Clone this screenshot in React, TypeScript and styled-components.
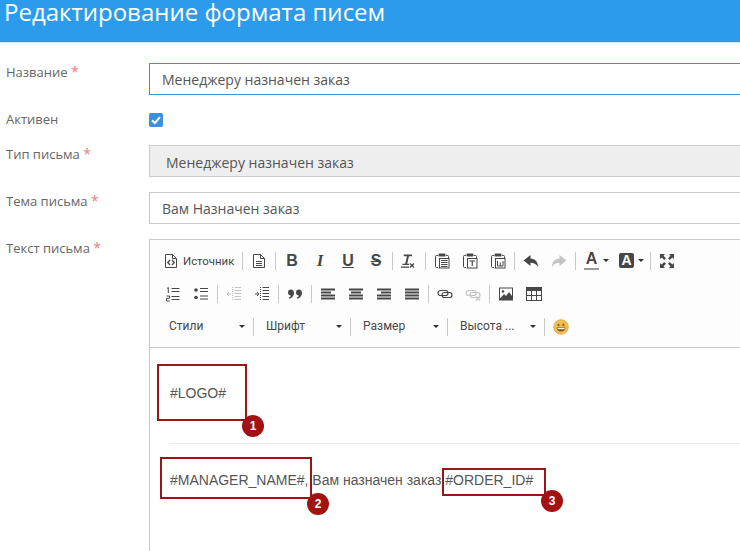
import { FC, ReactNode } from 'react';
import styled, { createGlobalStyle } from 'styled-components';

const GlobalStyle = createGlobalStyle`
	html, body {
		margin: 0;
		padding: 0;
		width: 740px;
		height: 551px;
		overflow: hidden;
		background: #fff;
	}
`;

const INK = '#474747';
const FAINT = '#c4c4c4';

const Glyph: FC<{ children: ReactNode }> = ({ children }) => (
	<svg width="16" height="16" viewBox="0 0 16 16" fill="none">
		{children}
	</svg>
);

const Clipboard: FC<{ children: ReactNode }> = ({ children }) => (
	<Glyph>
		<path d="M4 2.500H2.500Q1.500 2.500 1.500 3.500v10q0 1 1 1H4M12 2.500h1.500q1 0 1 1v2" stroke={INK} strokeWidth="1" />
		<rect x="4.500" y="0.500" width="7" height="3" rx="1" fill={INK} />
		<rect x="5.500" y="5.500" width="9.500" height="9.500" fill="#fff" stroke={INK} strokeWidth="1" />
		{children}
	</Glyph>
);

const Lines: FC<{ rows: [number, number][]; color?: string }> = ({ rows, color = INK }) => (
	<Glyph>
		{rows.map(([x, w], i) => (
			<rect key={i} x={x} y={2.500 + i * 3} width={w} height="2" fill={color} />
		))}
	</Glyph>
);

const SourceIcon = () => (
	<Glyph>
		<path d="M2.500 14.500V1.500h7l4 4v9z" stroke={INK} strokeWidth="1" />
		<path d="M9.500 1.500v4h4" stroke={INK} strokeWidth="1" />
		<path d="M7 7 4.800 9.500 7 12M9 7l2.200 2.500L9 12" stroke={INK} strokeWidth="1.300" />
	</Glyph>
);

const DocIcon = () => (
	<Glyph>
		<path d="M2.500 14.500V1.500h7l4 4v9z" stroke={INK} strokeWidth="1" />
		<path d="M9.500 1.500v4h4M5 8.500h6M5 10.500h6M5 12.500h6" stroke={INK} strokeWidth="1" />
	</Glyph>
);

const ClearIcon = () => (
	<Glyph>
		<g transform="translate(-2 0)">
			<path d="M4.500 1.500h8.500v1.800h-3L8.200 10.800H10V12H3.500v-1.200h2.700L8 3.300H5z" fill={INK} />
			<rect x="2" y="13.500" width="8" height="1.300" fill={INK} />
			<path d="m11 10.500 4 4M15 10.500l-4 4" stroke={INK} strokeWidth="1.400" />
		</g>
	</Glyph>
);

const PasteIcon = () => (
	<Clipboard>
		<path d="M7 7.500h6.500M7 9.500h6.500M7 11.500h6.500M7 13.500h6.500" stroke={INK} strokeWidth="1" />
	</Clipboard>
);

const PasteTextIcon = () => (
	<Clipboard>
		<path d="M7.500 8h5.500M10.250 8v5" stroke={INK} strokeWidth="1.200" />
	</Clipboard>
);

const PasteWordIcon = () => (
	<Clipboard>
		<path d="M7.500 8v5h5.500V8M10.250 9.500V13" stroke={INK} strokeWidth="1" />
	</Clipboard>
);

const UndoIcon: FC<{ color?: string }> = ({ color = INK }) => (
	<Glyph>
		<path d="M7.500 2 .5 7.500l7 5.500V9.700c3.300 0 5.800 1 7.500 4.300 0-5-2.500-8-7.500-8.500z" fill={color} />
	</Glyph>
);

const RedoIcon: FC<{ color?: string }> = ({ color = INK }) => (
	<Glyph>
		<path d="M8.500 2l7 5.500-7 5.500V9.700c-3.300 0-5.800 1-7.500 4.300 0-5 2.500-8 7.500-8.500z" fill={color} />
	</Glyph>
);

const MaximizeIcon = () => (
	<Glyph>
		<path d="M1 1h5L4.500 2.700 7 5.200 5.200 7 2.700 4.500 1 6zM15 1v5l-1.700-1.500L10.800 7 9 5.200l2.500-2.500L10 1zM1 15v-5l1.700 1.500L5.200 9 7 10.800l-2.500 2.500L6 15zM15 15h-5l1.500-1.700L9 10.800 10.800 9l2.500 2.500L15 10z" fill={INK} />
	</Glyph>
);

const NumberedIcon = () => (
	<Glyph>
		<path d="M6.500 2.500h8M6.500 5.500h8M6.500 10.500h8M6.500 13.500h8" stroke={INK} strokeWidth="1" />
		<path d="M2 2.500 3.300 1.500V7M1.500 10h3v2.300h-3V15h3.300" stroke={INK} strokeWidth="1" />
	</Glyph>
);

const BulletsIcon = () => (
	<Glyph>
		<circle cx="3" cy="4" r="1.800" fill={INK} />
		<circle cx="3" cy="11.500" r="1.800" fill={INK} />
		<path d="M7 2.500h8M7 5.500h8M7 10h8M7 13h8" stroke={INK} strokeWidth="1" />
	</Glyph>
);

const IndentIcon: FC<{ reversed?: boolean; color?: string }> = ({ reversed, color = INK }) => (
	<Glyph>
		<path d="M8.500 1.500h6.500M8.500 4.500h6.500M8.500 7.500h6.500M8.500 10.500h6.500M8.500 13.500h6.500" stroke={color} strokeWidth="1" />
		<path d="M6.500 1v14" stroke={color} strokeWidth="1" strokeDasharray="1 1" />
		<path d={reversed ? 'M5 8H1M3 6 1 8l2 2' : 'M1 8h4M3 6l2 2-2 2'} stroke={color} strokeWidth="1" />
	</Glyph>
);

const QuoteIcon = () => (
	<Glyph>
		<path d="M3.800 3.500C5.900 3.500 7 5 7 7c0 3-2.200 5.200-4.800 5.800l-.5-1c1.200-.6 2-1.400 2.200-2.300C2.200 9.500 1 8.300 1 6.500c0-1.700 1.200-3 2.800-3zM11.800 3.500c2.100 0 3.200 1.500 3.200 3.500 0 3-2.200 5.200-4.800 5.800l-.5-1c1.200-.6 2-1.400 2.200-2.300-1.700 0-2.900-1.200-2.900-3 0-1.700 1.200-3 2.800-3z" fill={INK} />
	</Glyph>
);

const LinkIcon: FC<{ color?: string; cut?: boolean }> = ({ color = INK, cut }) => (
	<Glyph>
		<rect x="1" y="4.500" width="10" height="5" rx="2.500" stroke={color} strokeWidth="1.200" />
		<rect x="5" y="6.500" width="10" height="5" rx="2.500" stroke={color} strokeWidth="1.200" />
		{cut && <path d="m11 10.500 4 4M15 10.500l-4 4" stroke={color} strokeWidth="1.300" />}
	</Glyph>
);

const ImageIcon = () => (
	<Glyph>
		<rect x="1" y="1.500" width="14" height="13" fill={INK} />
		<rect x="2" y="2.500" width="12" height="10" fill="#fff" />
		<circle cx="5" cy="5.500" r="1.300" fill={INK} />
		<path d="M2 12.500 6 8l2 2 3-4 3 4v3.500H2z" fill={INK} />
	</Glyph>
);

const TableIcon = () => (
	<Glyph>
		<rect x="0.500" y="1.500" width="15" height="13" stroke={INK} strokeWidth="1" />
		<rect x="0.500" y="1.500" width="15" height="3.500" fill={INK} />
		<path d="M5.500 5v9M10.500 5v9M1 9.500h14" stroke={INK} strokeWidth="1" />
	</Glyph>
);

const SmileyIcon = () => (
	<Glyph>
		<circle cx="8" cy="8" r="7.300" fill="#f1bf4f" stroke="#dca63a" strokeWidth="0.800" />
		<ellipse cx="5.500" cy="6" rx="1" ry="1.200" fill="#7a5a1e" />
		<ellipse cx="10.500" cy="6" rx="1" ry="1.200" fill="#7a5a1e" />
		<path d="M3.500 8.500h9c0 2.500-2 4-4.500 4s-4.500-1.500-4.500-4z" fill="#7a5a1e" />
		<path d="M4.500 9h7v1.200h-7z" fill="#fff" />
	</Glyph>
);

const Caret = styled.i`
	display: block;
	width: 0;
	height: 0;
	border-left: 3px solid transparent;
	border-right: 3px solid transparent;
	border-top: 3px solid #2f2f2f;
`;

const Page = styled.div`
	width: 740px;
	height: 551px;
	overflow: hidden;
	font-family: 'Open Sans', sans-serif;
	color: #555;
`;

const Header = styled.header`
	height: 42px;
	background: #2d9bec;
	border-bottom: 1px solid #cfe6f8;
	display: flex;
	align-items: flex-start;
	padding-left: 4px;
`;

const Title = styled.h1`
	margin: 0;
	font-size: 24px;
	line-height: 24px;
	font-weight: 400;
	color: #fff;
	white-space: nowrap;
`;

const Form = styled.div`
	padding-top: 20px;
	display: grid;
	grid-template-columns: 149px 640px;
`;

const Label = styled.div<{ $height: number }>`
	height: ${(p) => p.$height}px;
	padding-left: 6px;
	font-size: 13px;
	line-height: 18px;
	color: #666;
	white-space: nowrap;
`;

const Star = styled.span`
	color: #e58080;
	font-size: 14px;
`;

const Field = styled.div<{ $height: number }>`
	height: ${(p) => p.$height}px;
`;

const Input = styled.div<{ $focused?: boolean; $disabled?: boolean }>`
	box-sizing: border-box;
	height: 32px;
	line-height: ${(p) => (p.$disabled ? 33 : 31)}px;
	padding-left: ${(p) => (p.$disabled ? 16 : 12)}px;
	font-size: 14px;
	color: #555;
	border: 1px solid ${(p) => (p.$focused ? '#3f8fc9' : '#c9c9c9')};
	background: ${(p) => (p.$disabled ? '#eee' : '#fff')};
`;

const Check = styled.div`
	width: 14px;
	height: 14px;
	margin-top: 3px;
	border-radius: 2px;
	background: #3d8fe0;
	display: flex;
	align-items: center;
	justify-content: center;
`;

const Editor = styled.div`
	height: 313px;
	border: 1px solid #c9c9c9;
	border-right: none;
	box-sizing: border-box;
`;

const Toolbar = styled.div`
	height: 108px;
	box-sizing: border-box;
	padding: 4px 0 0 9px;
	background: #fdfdfd;
	border-bottom: 1px solid #c9c9c9;
`;

const ToolRow = styled.div`
	height: 33px;
	display: flex;
	align-items: center;
`;

const Tool = styled.div<{ $wide?: boolean }>`
	flex: none;
	width: ${(p) => (p.$wide ? 81 : 28)}px;
	height: 24px;
	display: flex;
	align-items: center;
	justify-content: ${(p) => (p.$wide ? 'flex-start' : 'center')};
	padding-left: ${(p) => (p.$wide ? 4 : 0)}px;
	box-sizing: border-box;
`;

const ToolText = styled.span`
	margin-left: 4px;
	font-family: 'Roboto', sans-serif;
	font-size: 11.400px;
	color: #474747;
	white-space: nowrap;
`;

const Letter = styled.span<{ $italic?: boolean; $under?: boolean; $strike?: boolean; $serif?: boolean }>`
	font-family: ${(p) => (p.$serif ? "'Liberation Serif'" : "'Liberation Sans'")}, sans-serif;
	font-size: ${(p) => (p.$italic ? 17 : 16)}px;
	font-weight: 700;
	font-style: ${(p) => (p.$italic ? 'italic' : 'normal')};
	color: #474747;
	text-decoration: ${(p) => (p.$under ? 'underline' : p.$strike ? 'line-through' : 'none')};
	line-height: 16px;
`;

const Sep = styled.div`
	flex: none;
	width: 1px;
	height: 18px;
	margin: 0 2px;
	background: #c8c8c8;
`;

const ColorTool = styled.div`
	flex: none;
	width: 35px;
	height: 24px;
	box-sizing: border-box;
	padding-left: 6px;
	display: flex;
	align-items: center;
	gap: 4px;
`;

const ColorA = styled.span`
	width: 15px;
	height: 17px;
	border-bottom: 2px solid #9a9a9a;
	font-family: 'Liberation Sans', sans-serif;
	font-weight: 700;
	font-size: 16px;
	line-height: 16px;
	text-align: center;
	color: #474747;
`;

const BgA = styled.span`
	width: 15px;
	height: 15px;
	border-radius: 2px;
	background: #474747;
	font-family: 'Liberation Sans', sans-serif;
	font-weight: 700;
	font-size: 14px;
	line-height: 15px;
	text-align: center;
	color: #fff;
`;

const Combo = styled.div`
	flex: none;
	box-sizing: border-box;
	width: 92px;
	height: 24px;
	padding: 0 6px 1px 10px;
	display: flex;
	align-items: center;
	justify-content: space-between;
	font-family: 'Roboto', sans-serif;
	font-size: 12px;
	color: #474747;
	white-space: nowrap;
`;

const Content = styled.div`
	position: relative;
	height: 203px;
	padding-left: 20px;
	font-family: 'Liberation Sans', sans-serif;
	font-size: 14px;
	color: #555;
	background: #fff;
`;

const ContentLine = styled.p<{ $top: number }>`
	margin: 0;
	padding-top: ${(p) => p.$top}px;
	line-height: 20px;
	white-space: nowrap;
`;

const Rule = styled.hr`
	margin: 40px 0 0;
	border: none;
	border-top: 1px solid #eaeaea;
`;

const Mark = styled.div<{ $x: number; $y: number; $w: number; $h: number }>`
	position: absolute;
	box-sizing: border-box;
	left: ${(p) => p.$x}px;
	top: ${(p) => p.$y}px;
	width: ${(p) => p.$w}px;
	height: ${(p) => p.$h}px;
	border: 2px solid #9a1515;
`;

const Badge = styled.div`
	position: absolute;
	right: -19px;
	bottom: -18px;
	width: 22px;
	height: 22px;
	border-radius: 50%;
	background: #a31212;
	color: #fff;
	font-family: 'Liberation Sans', sans-serif;
	font-weight: 700;
	font-size: 12px;
	line-height: 22px;
	text-align: center;
`;

const App: FC = () => (
	<Page>
		<GlobalStyle />
		<Header>
			<Title>Редактирование формата писем</Title>
		</Header>
		<Form>
			<Label $height={47}>
				Название <Star>*</Star>
			</Label>
			<Field $height={47}>
				<Input $focused>Менеджеру назначен заказ</Input>
			</Field>
			<Label $height={35}>Активен</Label>
			<Field $height={35}>
				<Check>
					<svg width="10" height="10" viewBox="0 0 10 10" fill="none">
						<path d="M1 5.200 3.800 8 9 2.200" stroke="#fff" strokeWidth="2" />
					</svg>
				</Check>
			</Field>
			<Label $height={47}>
				Тип письма <Star>*</Star>
			</Label>
			<Field $height={47}>
				<Input $disabled>Менеджеру назначен заказ</Input>
			</Field>
			<Label $height={47}>
				Тема письма <Star>*</Star>
			</Label>
			<Field $height={47}>
				<Input>Вам Назначен заказ</Input>
			</Field>
			<Label $height={312}>
				Текст письма <Star>*</Star>
			</Label>
			<Field $height={312}>
				<Editor>
					<Toolbar>
						<ToolRow>
							<Tool $wide>
								<SourceIcon />
								<ToolText>Источник</ToolText>
							</Tool>
							<Sep />
							<Tool><DocIcon /></Tool>
							<Sep />
							<Tool><Letter>B</Letter></Tool>
							<Tool><Letter $italic $serif>I</Letter></Tool>
							<Tool><Letter $under>U</Letter></Tool>
							<Tool><Letter $strike>S</Letter></Tool>
							<Sep />
							<Tool><ClearIcon /></Tool>
							<Sep />
							<Tool><PasteIcon /></Tool>
							<Tool><PasteTextIcon /></Tool>
							<Tool><PasteWordIcon /></Tool>
							<Sep />
							<Tool><UndoIcon /></Tool>
							<Tool><RedoIcon color={FAINT} /></Tool>
							<Sep />
							<ColorTool>
								<ColorA>A</ColorA>
								<Caret />
							</ColorTool>
							<ColorTool>
								<BgA>A</BgA>
								<Caret />
							</ColorTool>
							<Sep />
							<Tool><MaximizeIcon /></Tool>
						</ToolRow>
						<ToolRow>
							<Tool><NumberedIcon /></Tool>
							<Tool><BulletsIcon /></Tool>
							<Sep />
							<Tool><IndentIcon reversed color={FAINT} /></Tool>
							<Tool><IndentIcon /></Tool>
							<Sep />
							<Tool><QuoteIcon /></Tool>
							<Sep />
							<Tool><Lines rows={[[1, 14], [1, 10], [1, 14], [1, 14]]} /></Tool>
							<Tool><Lines rows={[[1, 14], [3, 10], [1, 14], [1, 14]]} /></Tool>
							<Tool><Lines rows={[[1, 14], [5, 10], [1, 14], [1, 14]]} /></Tool>
							<Tool><Lines rows={[[1, 14], [1, 14], [1, 14], [1, 14]]} /></Tool>
							<Sep />
							<Tool><LinkIcon /></Tool>
							<Tool><LinkIcon cut color={FAINT} /></Tool>
							<Sep />
							<Tool><ImageIcon /></Tool>
							<Tool><TableIcon /></Tool>
						</ToolRow>
						<ToolRow>
							<Combo>Стили<Caret /></Combo>
							<Sep />
							<Combo>Шрифт<Caret /></Combo>
							<Sep />
							<Combo>Размер<Caret /></Combo>
							<Sep />
							<Combo>Высота ...<Caret /></Combo>
							<Sep />
							<Tool><SmileyIcon /></Tool>
						</ToolRow>
					</Toolbar>
					<Content>
						<ContentLine $top={35}>#LOGO#</ContentLine>
						<Rule />
						<ContentLine $top={26}>#MANAGER_NAME#, Вам назначен заказ #ORDER_ID#</ContentLine>
						<Mark $x={7} $y={16} $w={90} $h={57}><Badge>1</Badge></Mark>
						<Mark $x={10} $y={109} $w={152} $h={42}><Badge>2</Badge></Mark>
						<Mark $x={292} $y={120} $w={104} $h={28}><Badge>3</Badge></Mark>
					</Content>
				</Editor>
			</Field>
		</Form>
	</Page>
);

export default App;
